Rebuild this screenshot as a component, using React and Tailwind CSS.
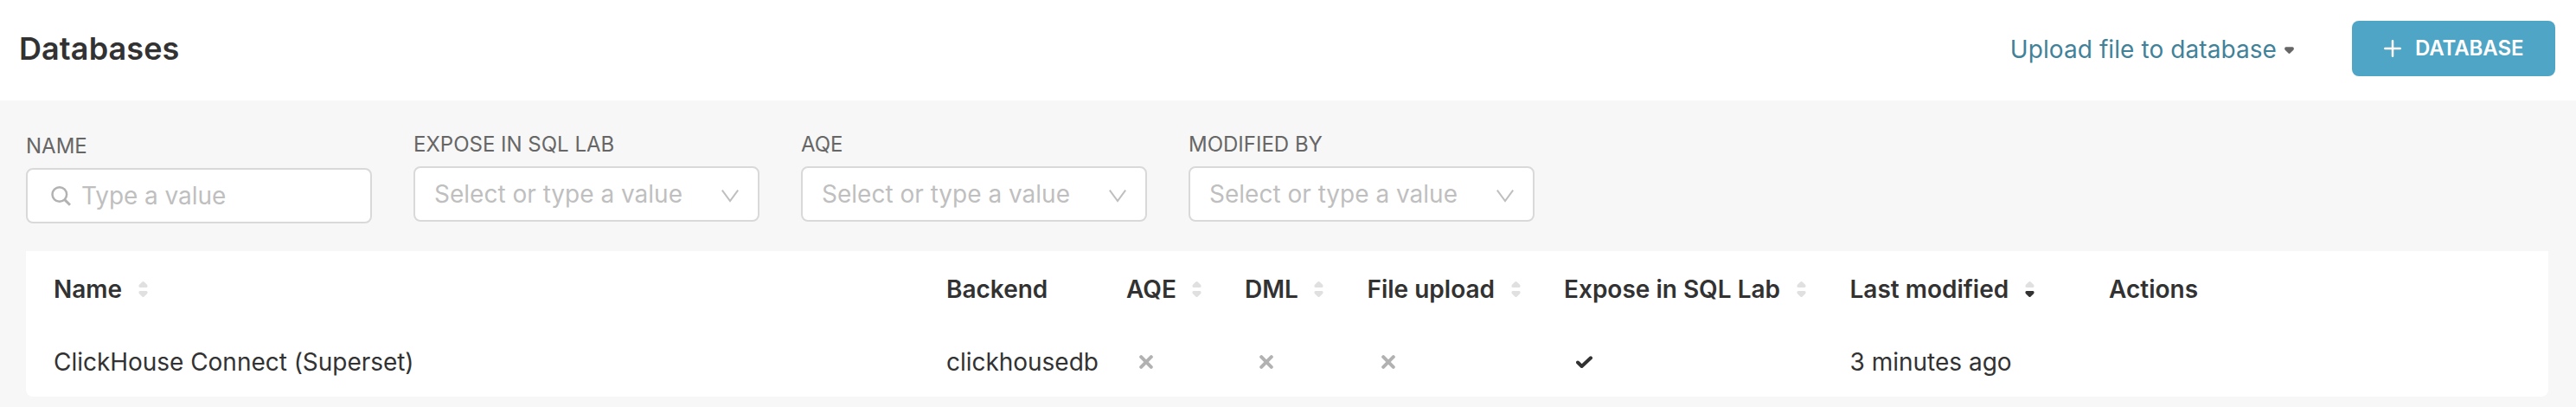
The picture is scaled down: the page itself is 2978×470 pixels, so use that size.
const COLS = 'grid grid-cols-[1032px_208px_137px_141.5px_227.5px_330.5px_299.5px_1fr] items-center pl-8';

function Sorter({ desc }) {
  return (
    <svg className="ml-[18.5px] h-[18px] w-[11px] shrink-0" viewBox="0 0 11 18">
      <path d="M4.4.6a1.6 1.6 0 0 1 2.200 0L10 3.800c1 1 .6 3.200-.8 3.200H1.800C.4 7 0 4.800 1 3.800z" fill="#e0e0e0" />
      <path d="M4.400 17.400a1.600 1.600 0 0 0 2.200 0L10 14.200c1-1 .6-3.200-.8-3.200H1.800C.4 11 0 13.200 1 14.200z" fill={desc ? '#323232' : '#e0e0e0'} />
    </svg>
  );
}

function Head({ children, sort, desc }) {
  return (
    <div className="flex items-center whitespace-nowrap">
      <span>{children}</span>
      {sort && <Sorter desc={desc} />}
    </div>
  );
}

function Cross({ className = 'ml-[16.5px]' }) {
  return (
    <svg className={`${className} h-4 w-4`} viewBox="0 0 16 16">
      <path d="M2.200 2.200L13.800 13.800M13.800 2.200L2.200 13.800" fill="none" stroke="#b2b2b2" strokeWidth="4" strokeLinecap="round" />
    </svg>
  );
}

function Check() {
  return (
    <svg className="ml-3.5 h-[15px] w-[19px]" viewBox="0 0 19 15">
      <path d="M2 7.500L6.600 12L17 2.300" fill="none" stroke="#323232" strokeWidth="4" strokeLinecap="round" strokeLinejoin="round" />
    </svg>
  );
}

function SelectFilter({ label }) {
  return (
    <div className="w-[400px]">
      <div className="h-[52px] pt-[9px] text-2xl leading-[36px] text-[#666666]">{label}</div>
      <div className="flex h-16 items-center justify-between rounded-lg border-2 border-[#d9d9d9] bg-white px-[22px] text-[28px] text-[#bfbfbf]">
        <span>Select or type a value</span>
        <svg className="mt-1 h-[15px] w-5" viewBox="0 0 20 15">
          <path d="M.8.6L10 13L19.200.6" fill="none" stroke="#bfbfbf" strokeWidth="2" />
        </svg>
      </div>
    </div>
  );
}

export default function App() {
  return (
    <div className="h-[470px] w-[2978px] overflow-hidden bg-[#f7f7f7] font-['Inter',sans-serif] text-[#323232]">
      <header className="flex h-[116px] items-center bg-white pr-6 pb-1 pl-[22px]">
        <h1 className="flex-1 text-[36px] leading-none font-semibold tracking-[0.1px]">Databases</h1>
        <a className="flex items-center pt-0.5 text-[28px] leading-none tracking-[0.08px] text-[#3f8299]">
          <span>Upload file to database</span>
          <svg className="mt-0.5 ml-[9px] h-2 w-[11px]" viewBox="0 0 11 8">
            <path d="M4.300 7.300a1.600 1.600 0 0 0 2.400 0L10.300 3.700C11.400 2.400 10.800.2 9.200.2H1.800C.2.200-.4 2.400.7 3.700z" fill="#666666" />
          </svg>
        </a>
        <button className="ml-[67px] flex h-16 w-[235px] items-center rounded-lg bg-[#4fa5c5] pl-[37px] text-2xl leading-none font-semibold tracking-[-0.1px] text-white">
          <svg className="mr-4 h-5 w-5" viewBox="0 0 20 20">
            <path d="M10 1.300v17.400M1.300 10h17.400" fill="none" stroke="#fff" strokeWidth="2.500" strokeLinecap="round" />
          </svg>
          <span>DATABASE</span>
        </button>
      </header>

      <section className="flex h-[174px] items-start gap-12 px-[30px] pt-6">
        <div className="w-[400px]">
          <div className="h-[54px] pt-[11px] text-2xl leading-[36px] text-[#666666]">NAME</div>
          <div className="flex h-16 items-center rounded-lg border-2 border-[#d9d9d9] bg-white pl-[26px] text-[28px] tracking-[-0.06px] text-[#bfbfbf]">
            <svg className="mr-3 h-6 w-6" viewBox="0 0 24 24">
              <circle cx="10.800" cy="10.500" r="8.300" fill="none" stroke="#b2b2b2" strokeWidth="2.500" />
              <path d="M16.800 16.600L23 22.800" stroke="#b2b2b2" strokeWidth="3" />
            </svg>
            <span>Type a value</span>
          </div>
        </div>
        <SelectFilter label="EXPOSE IN SQL LAB" />
        <SelectFilter label="AQE" />
        <SelectFilter label="MODIFIED BY" />
      </section>

      <section className="mr-8 ml-[30px] h-[168px] rounded-b-lg bg-white text-[28px] leading-none">
        <div className={`${COLS} h-[88px] font-semibold`}>
          <Head sort>Name</Head>
          <Head>Backend</Head>
          <Head sort>AQE</Head>
          <Head sort>DML</Head>
          <Head sort>File upload</Head>
          <Head sort>Expose in SQL Lab</Head>
          <Head sort desc>Last modified</Head>
          <Head>Actions</Head>
        </div>
        <div className={`${COLS} h-20`}>
          <span className="tracking-[-0.03px]">ClickHouse Connect (Superset)</span>
          <span className="tracking-[-0.03px]">clickhousedb</span>
          <Cross className="ml-[15px]" />
          <Cross />
          <Cross />
          <Check />
          <span>3 minutes ago</span>
        </div>
      </section>
    </div>
  );
}
